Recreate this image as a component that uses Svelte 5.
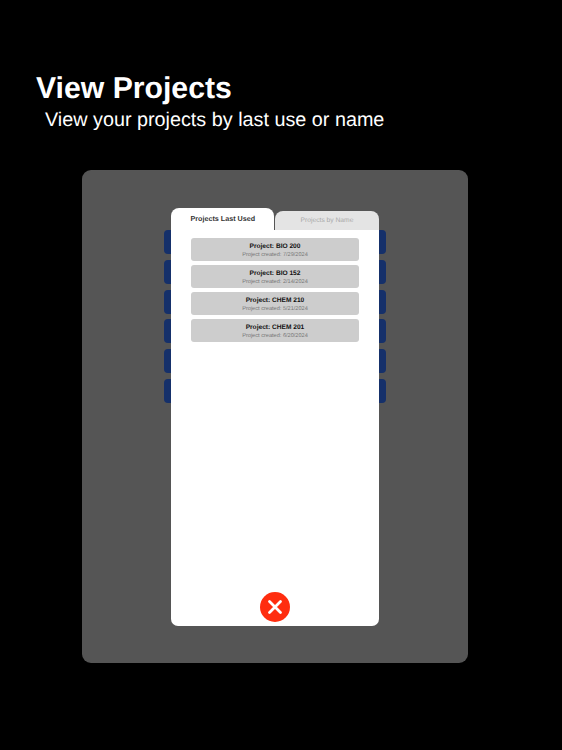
<script>
  const bars = [1, 2, 3, 4, 5, 6];
  const projects = [
    { name: 'BIO 200', created: '7/29/2024' },
    { name: 'BIO 152', created: '2/14/2024' },
    { name: 'CHEM 210', created: '5/21/2024' },
    { name: 'CHEM 201', created: '6/20/2024' },
  ];
</script>

<main class="page">
  <header class="intro">
    <h1>View Projects</h1>
    <p>View your projects by last use or name</p>
  </header>

  <section class="tablet">
    <div class="bars">
      {#each bars as bar (bar)}
        <div class="bar"></div>
      {/each}
    </div>

    <div class="modal">
      <div class="tabs">
        <div class="tab active">Projects Last Used</div>
        <div class="tab">Projects by Name</div>
      </div>
      <div class="sheet">
        <ul class="list">
          {#each projects as project (project.name)}
            <li class="item">
              <strong>Project: {project.name}</strong>
              <span>Project created: {project.created}</span>
            </li>
          {/each}
        </ul>
        <button class="close" type="button" aria-label="Close">
          <svg viewBox="0 0 30 30" width="30" height="30">
            <circle cx="15" cy="15" r="15" fill="#ff2d0f" />
            <path d="M9.5 9.5 L20.5 20.5 M20.5 9.5 L9.5 20.5" stroke="#fff" stroke-width="2.8" stroke-linecap="round" fill="none" />
          </svg>
        </button>
      </div>
    </div>
  </section>
</main>

<style>
  :global(body) {
    margin: 0;
    background: #000;
  }

  .page {
    width: 562px;
    height: 750px;
    overflow: hidden;
    padding-top: 70px;
    box-sizing: border-box;
    font-family: "Liberation Sans", Arial, sans-serif;
    text-rendering: geometricPrecision;
  }

  .intro {
    height: 100px;
    color: #fff;
  }

  h1 {
    margin: 0 0 0 36px;
    font-size: 30.2px;
    line-height: 37px;
    font-weight: 700;
  }

  .intro p {
    margin: 0 0 0 45px;
    font-size: 19.8px;
    line-height: 26px;
  }

  .tablet {
    position: relative;
    width: 385.5px;
    height: 493px;
    margin-left: 82px;
    background: #555;
    border-radius: 9px;
  }

  .bars {
    display: flex;
    flex-direction: column;
    gap: 5.8px;
    width: 222px;
    margin-left: 82px;
    padding-top: 60px;
  }

  .bar {
    height: 24px;
    background: #15306a;
    border-radius: 4px;
  }

  .modal {
    position: absolute;
    left: 89.3px;
    top: 38px;
    width: 207.4px;
    height: 418px;
    display: flex;
    flex-direction: column;
  }

  .tabs {
    display: flex;
    align-items: flex-end;
    height: 22px;
    gap: 1px;
  }

  .tab {
    flex: 1;
    height: 19px;
    background: #e4e4e4;
    color: #a8a8a8;
    border-radius: 8px 8px 0 0;
    font-size: 6.7px;
    line-height: 20px;
    text-align: center;
  }

  .tab.active {
    flex: none;
    width: 103px;
    height: 22px;
    background: #fff;
    color: #333;
    font-size: 7.2px;
    font-weight: 700;
    line-height: 21px;
  }

  .sheet {
    flex: 1;
    display: flex;
    flex-direction: column;
    justify-content: space-between;
    align-items: center;
    background: #fff;
    border-radius: 0 0 7px 7px;
    padding: 8px 0 4px;
  }

  .list {
    list-style: none;
    margin: 0;
    padding: 0;
    width: 168.5px;
    display: flex;
    flex-direction: column;
    gap: 4px;
  }

  .item {
    height: 23px;
    display: flex;
    flex-direction: column;
    align-items: center;
    justify-content: center;
    padding-top: 1px;
    box-sizing: border-box;
    background: #cdcdcd;
    border-radius: 3px;
  }

  .item strong {
    font-size: 6.6px;
    line-height: 9px;
    color: #111;
  }

  .item span {
    font-size: 5.6px;
    line-height: 8px;
    color: #777;
  }

  .close {
    padding: 0;
    border: 0;
    background: none;
    width: 30px;
    height: 30px;
    display: block;
  }

  .close svg {
    display: block;
  }
</style>
